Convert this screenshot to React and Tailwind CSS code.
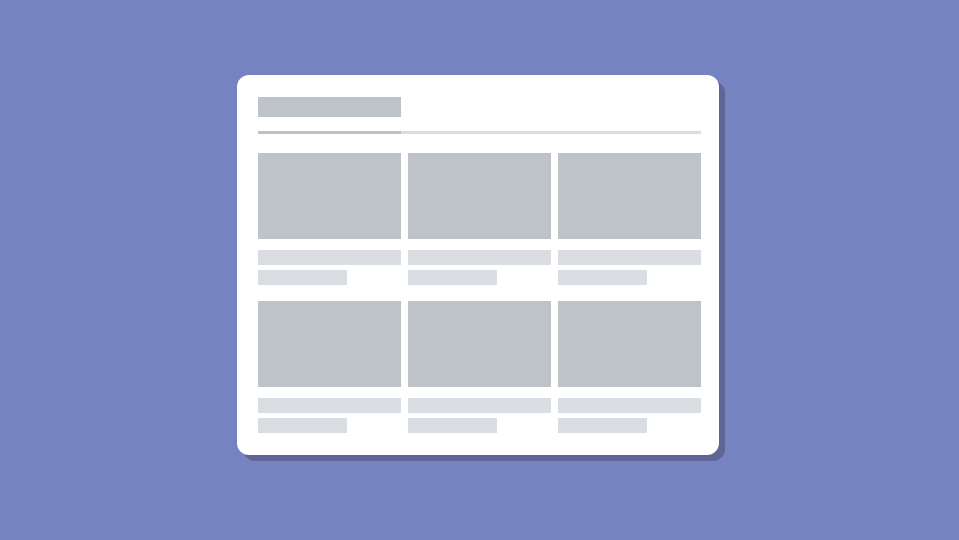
import React from "react";

const items = [0, 1, 2, 3, 4, 5];

function Tile() {
  return (
    <div className="flex flex-col">
      <div className="h-[86px] bg-[#bec2c9]"></div>
      <div className="mt-[11px] h-[15px] bg-[#dadee2]"></div>
      <div className="mt-[5px] h-[15px] w-[89px] bg-[#dadee2]"></div>
    </div>
  );
}

export default function App() {
  return (
    <div className="w-[959px] h-[540px] bg-[#7584c1] flex items-start justify-center pt-[75px] pr-[3px]">
      <div className="w-[482px] h-[380px] bg-white rounded-xl shadow-[6px_6px_0_#5f6596] pt-[22px] pl-[21px] pr-[18px]">
        <div className="w-[143px] h-[20px] bg-[#bec2c9]"></div>
        <div className="mt-[14px] h-[3px] bg-[#dadee2] flex">
          <div className="w-[143px] h-full bg-[#bcc0c7]"></div>
        </div>
        <div className="mt-[19px] grid grid-cols-3 gap-x-[7px] gap-y-[16px]">
          {items.map((i) => (
            <Tile key={i} />
          ))}
        </div>
      </div>
    </div>
  );
}
